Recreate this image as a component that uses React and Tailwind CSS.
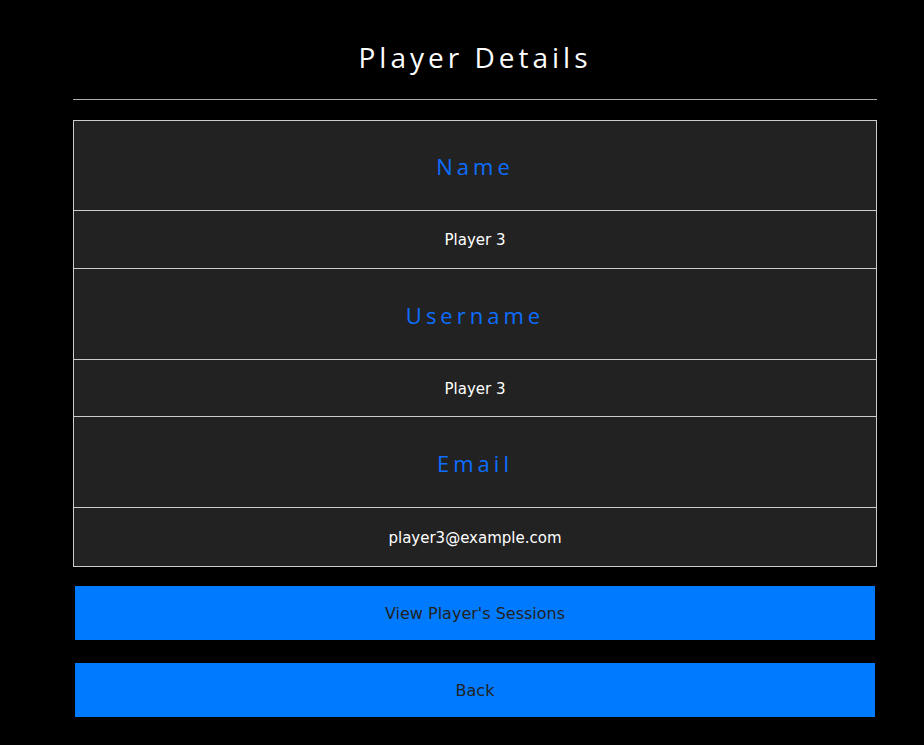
export default function App() {
  const rows = [
    ["Name", "Player 3", "h-[89px]", "h-[58px]"],
    ["Username", "Player 3", "h-[91px]", "h-[57px]"],
    ["Email", "player3@example.com", "h-[91px]", "h-[59px]"],
  ];
  return (
    <div className="min-h-[745px] w-full bg-black">
      <div className="ml-[73px] w-[804px] pt-[38px]">
        <h1 className="text-center text-[28px] leading-[38px] tracking-[4px] text-white" style={{ fontFamily: '"Open Sans", "Noto Sans", sans-serif' }}>
          Player Details
        </h1>
        <div className="mt-[23px] h-px bg-[#aaa]" />
        <div className="mt-[20px] border border-[#ccc] bg-[#222]">
          {rows.map(([label, value, hh, vh], i) => (
            <div key={label}>
              <div className={`flex ${hh} items-center justify-center pt-[2px] ${i > 0 ? "border-t border-[#ccc]" : ""}`}>
                <span className="text-[22px] tracking-[4px] text-[#0d6efd]" style={{ fontFamily: '"Open Sans", "Noto Sans", sans-serif' }}>{label}</span>
              </div>
              <div className={`flex ${vh} items-center justify-center border-t border-[#ccc] pt-[2px]`}>
                <span className="text-[15px] text-white" style={{ fontFamily: '"DejaVu Sans", Verdana, sans-serif' }}>{value}</span>
              </div>
            </div>
          ))}
        </div>
        <div className="mx-[2px] mt-[19px] flex flex-col gap-[23px]">
          <button className="h-[54px] w-full bg-[#007bff] pt-[2px] text-[16px] text-[#222]" style={{ fontFamily: '"DejaVu Sans", Verdana, sans-serif' }}>
            View Player's Sessions
          </button>
          <button className="h-[54px] w-full bg-[#007bff] pt-[2px] text-[16px] text-[#222]" style={{ fontFamily: '"DejaVu Sans", Verdana, sans-serif' }}>
            Back
          </button>
        </div>
      </div>
    </div>
  );
}
